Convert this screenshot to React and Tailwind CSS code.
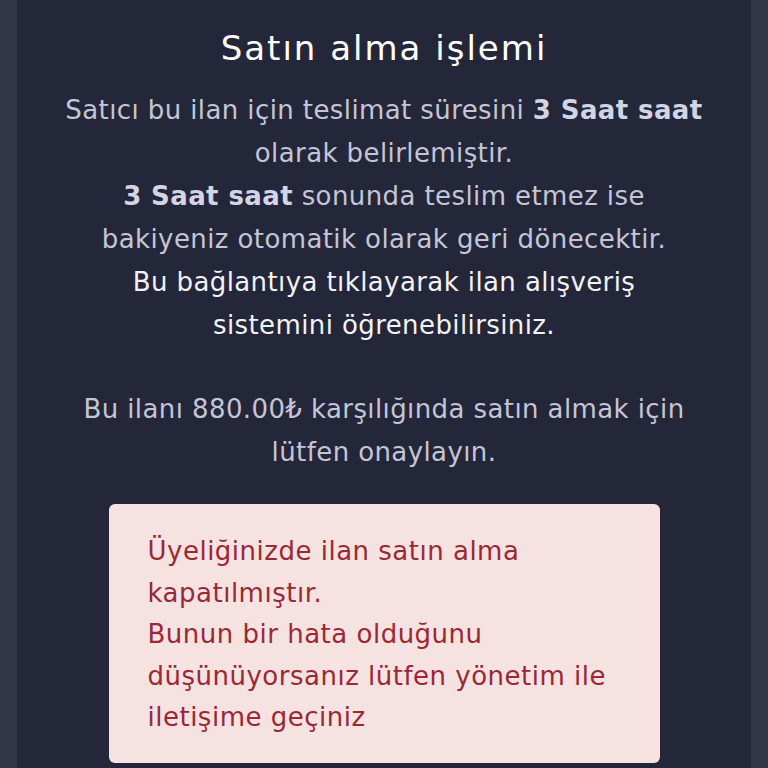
import React from "react";

export default function App() {
  return (
    <div
      className="min-h-[768px] bg-[#323448] px-[17px]"
      style={{ fontFamily: '"DejaVu Sans", "Noto Sans", sans-serif' }}
    >
      <div className="min-h-[768px] bg-[#24273a] px-[38px] pt-[26px] pb-[10px] text-center">
        <h2 className="text-[34px] leading-[44px] tracking-[2px] text-white">Satın alma işlemi</h2>

        <div className="mx-auto mt-[19px] max-w-[646px] text-[26px] leading-[43px] tracking-[0.4px] text-[#c4c5d6]">
          <p>
            Satıcı bu ilan için teslimat süresini <b className="font-bold text-[#d3d4e4]">3 Saat saat</b> olarak belirlemiştir.
            <br />
            <b className="font-bold text-[#d3d4e4]">3 Saat saat</b> sonunda teslim etmez ise bakiyeniz otomatik olarak geri dönecektir.
          </p>
          <a className="mx-auto block max-w-[560px] text-[#f2f2f8]">
            Bu bağlantıya tıklayarak ilan alışveriş sistemini öğrenebilirsiniz.
          </a>
          <p className="mt-[41px]">
            Bu ilanı 880.00₺ karşılığında satın almak için lütfen onaylayın.
          </p>
        </div>

        <div className="mx-auto mt-[30px] w-[551px] rounded-[6px] bg-[#f5e2e1] px-[39px] pt-[27px] pb-[24px] text-left text-[26px] leading-[41.5px] tracking-[0.5px] text-[#9c2833]">
          Üyeliğinizde ilan satın alma kapatılmıştır.
          <br />
          Bunun bir hata olduğunu düşünüyorsanız lütfen yönetim ile iletişime geçiniz
        </div>
      </div>
    </div>
  );
}
